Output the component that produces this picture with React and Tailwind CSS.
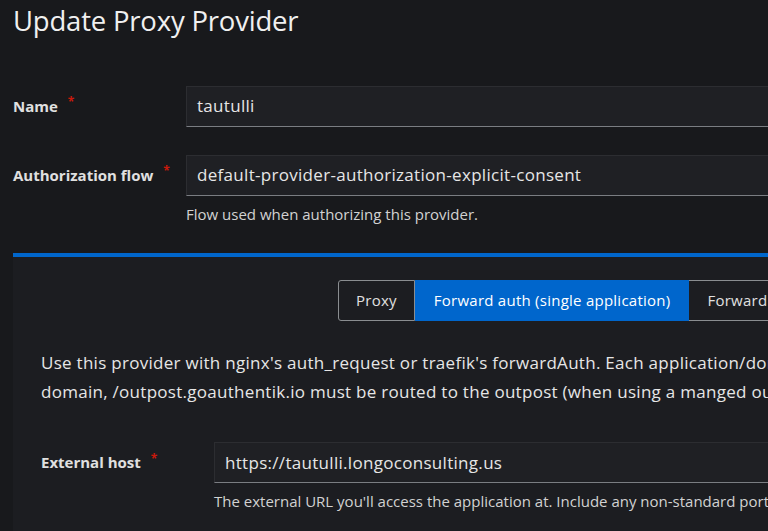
import React from "react"

const font = { fontFamily: '"Open Sans", "Noto Sans", sans-serif' }

function Label({ children }) {
    return (
        <div className="flex items-center gap-[10px] text-[15px] font-bold text-[#e0e0e0]">
            <span>{children}</span>
            <span className="text-[#c9190b] text-xs leading-none -mt-2">*</span>
        </div>
    )
}

function Field({ label, value, helper }) {
    return (
        <div className="flex">
            <div className="w-[173px] shrink-0 h-[41px] flex items-center">
                <Label>{label}</Label>
            </div>
            <div className="flex-1">
                <div className="h-[41px] flex items-center px-[10px] bg-[#1f2024] border border-[#2c2d31] border-b-[#7a7d82] border-r-0 text-[17px] tracking-[0.3px] text-[#e6e6e6]">
                    {value}
                </div>
                {helper && (
                    <div className="text-[15px] text-[#d2d2d2] mt-[7px] whitespace-nowrap">{helper}</div>
                )}
            </div>
        </div>
    )
}

export default function App() {
    return (
        <div style={font} className="w-[768px] h-[531px] overflow-hidden bg-[#18191c]">
            <div className="w-[1200px] pl-[13px]">
                <h1 className="text-[27.5px] leading-none text-[#f0f0f0] pt-[7px] tracking-[-0.2px]">
                    Update Proxy Provider
                </h1>

                <div className="mt-[51px]">
                    <Field label="Name" value="tautulli" />
                </div>
                <div className="mt-[28px]">
                    <Field
                        label="Authorization flow"
                        value="default-provider-authorization-explicit-consent"
                        helper="Flow used when authorizing this provider."
                    />
                </div>

                <div className="mt-[28px] border-t-[4px] border-[#0066cc] bg-[#1c1d21] pl-[28px] pt-[23px] pb-[40px]">
                    <div className="flex ml-[297px] text-[15px] tracking-[0.25px]">
                        <div className="h-[41px] px-[17px] flex items-center border border-[#8a8d90] rounded-l-[3px] text-[#e0e0e0]">
                            Proxy
                        </div>
                        <div className="h-[41px] px-[19px] flex items-center bg-[#0066cc] text-white">
                            Forward auth (single application)
                        </div>
                        <div className="h-[41px] px-[18px] flex items-center border border-[#8a8d90] border-l-0 text-[#e0e0e0]">
                            Forward auth (domain level)
                        </div>
                    </div>

                    <div className="mt-[27px] text-[17px] tracking-[0.28px] leading-[29px] text-[#e6e6e6] whitespace-nowrap">
                        <p>Use this provider with nginx's auth_request or traefik's forwardAuth. Each application/domain needs its own provider. Additionally, on each</p>
                        <p>domain, /outpost.goauthentik.io must be routed to the outpost (when using a manged outpost, this is done for you).</p>
                    </div>

                    <div className="mt-[36px]">
                        <Field
                            label="External host"
                            value="https://tautulli.longoconsulting.us"
                            helper="The external URL you'll access the application at. Include any non-standard port."
                        />
                    </div>
                </div>
            </div>
        </div>
    )
}
